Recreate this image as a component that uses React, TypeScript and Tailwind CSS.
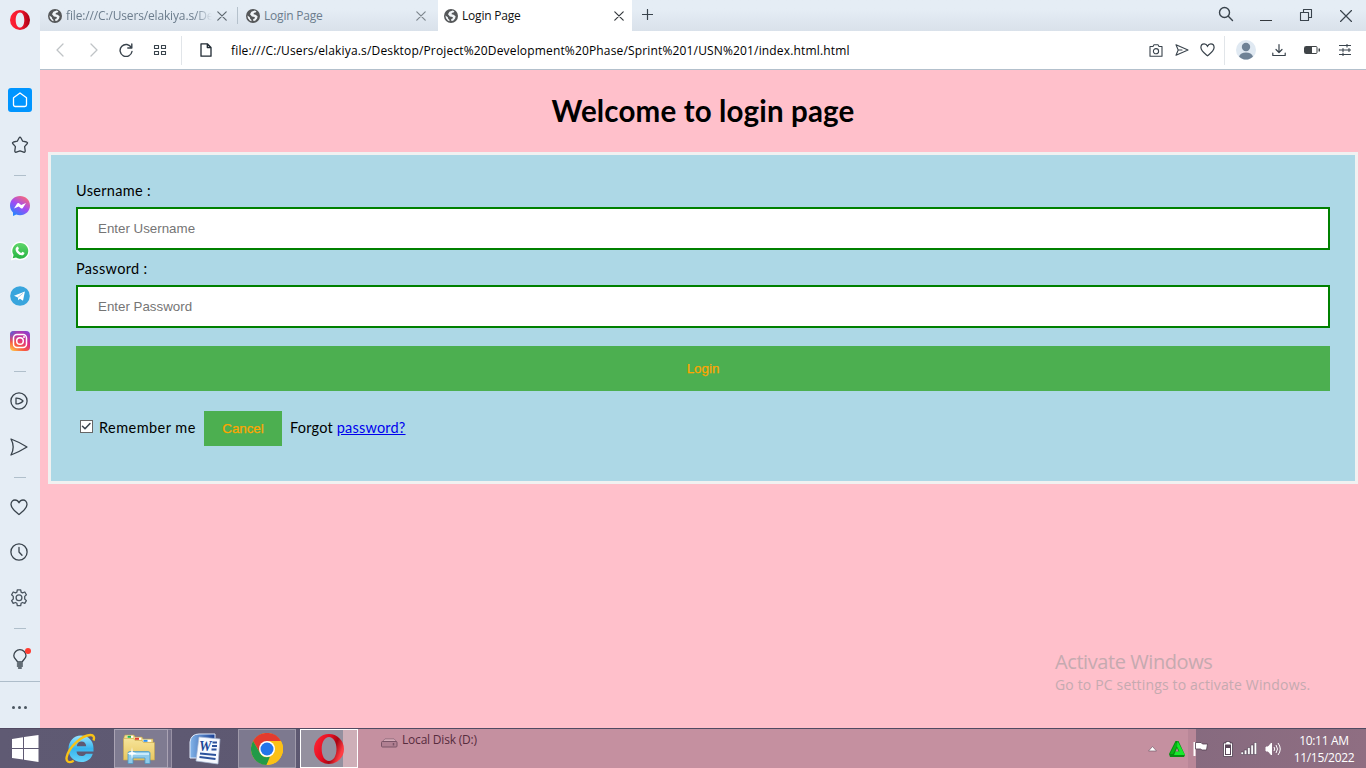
import React from "react";

const ui = "font-['Open_Sans','Noto_Sans',sans-serif]";
const page = "font-[Lato,'Open_Sans',sans-serif]";

type IconProps = { className?: string };

function Stroke({ w, h, d, className = "text-[#39434c]", sw = 1.3 }: { w: number; h: number; d: string; className?: string; sw?: number }) {
  return (
    <svg width={w} height={h} viewBox={`0 0 ${w} ${h}`} fill="none" stroke="currentColor" strokeWidth={sw} strokeLinejoin="round" strokeLinecap="round" className={`shrink-0 ${className}`}>
      <path d={d} />
    </svg>
  );
}

function Cell({ className, children }: { className: string; children?: React.ReactNode }) {
  return <div className={`flex shrink-0 items-center justify-center ${className}`}>{children}</div>;
}

function Globe() {
  return (
    <svg width="14" height="14" viewBox="0 0 14 14" className="shrink-0">
      <circle cx="7" cy="7" r="7" fill="#555759" />
      <path d="M8.600 1.600 5.400 2.800 4 5.300l1.900 2.200 2.800.5.2 1.200-1.800 1 .3 1.900 1.800-.4 1.900-2.200.5-2.300-2-1.500-2-.4.2-1.300 2.200-.7.3-1Z" fill="#f1f4f7" />
      <path d="m1.400 6.400 2.400 1.800.4 1.500 1.300 1.400-.1 1.100-1.600-.8-1.800-2.200Z" fill="#f1f4f7" />
    </svg>
  );
}

function Close({ className }: IconProps) {
  return <Stroke w={10} h={10} d="M.8.8l8.400 8.400M9.200.8.8 9.200" sw={1.2} className={className} />;
}

function OperaLogo() {
  return (
    <svg width="20" height="20" viewBox="0 0 20 20">
      <defs>
        <linearGradient id="ol" x1="0" x2="1"><stop offset="0" stopColor="#ff2135" /><stop offset=".55" stopColor="#f0162c" /><stop offset="1" stopColor="#a70014" /></linearGradient>
      </defs>
      <path fillRule="evenodd" fill="url(#ol)" d="M10 0a10 10 0 1 0 0 20 10 10 0 0 0 0-20Zm0 2.400c2.600 0 4.300 3.200 4.300 7.600s-1.700 7.600-4.300 7.600S5.700 14.400 5.700 10 7.400 2.400 10 2.400Z" />
    </svg>
  );
}

const heart = "M9 15.500C6.500 13.500 1 9.800 1 5.500 1 2.900 2.900 1 5 1c1.900 0 3.200 1.100 4 2.800C9.800 2.100 11.100 1 13 1c2.100 0 4 1.900 4 4.500 0 4.300-5.500 8-8 10Z";

function Messenger() {
  return (
    <svg width="20" height="20" viewBox="0 0 20 20">
      <defs><linearGradient id="ms" x1=".2" y1="1" x2=".8" y2="0"><stop offset="0" stopColor="#1a8cff" /><stop offset=".5" stopColor="#a04bf5" /><stop offset="1" stopColor="#ff6b70" /></linearGradient></defs>
      <path fill="url(#ms)" d="M10 0C4.400 0 0 4.100 0 9.500c0 2.900 1.200 5.300 3 7V20l3.200-1.400c1.100.4 2.500.6 3.800.6 5.600 0 10-4.200 10-9.700S15.600 0 10 0Z" />
      <path fill="#fff" d="M4 12.500 7.100 7.600c.4-.7 1.200-.8 1.900-.4l2.200 1.700L16 6.900l-3.200 5c-.4.700-1.200.8-1.900.3L8.700 10.500Z" />
    </svg>
  );
}

function WhatsApp() {
  return (
    <svg width="20" height="20" viewBox="0 0 20 20">
      <defs><linearGradient id="wa" x1="0" y1="0" x2="0" y2="1"><stop offset="0" stopColor="#5fd66b" /><stop offset="1" stopColor="#28b442" /></linearGradient></defs>
      <path fill="#fff" d="M10.300.5a9.300 9.300 0 0 0-8 14L.8 19.500l5-1.300A9.400 9.400 0 1 0 10.300.5Z" />
      <path fill="url(#wa)" d="M10.300 2a7.900 7.900 0 0 0-6.700 12.100l-.9 3.200 3.300-.8A7.900 7.900 0 1 0 10.300 2Z" />
      <path fill="#fff" d="M7.200 5.700c.5-.2.900 0 1 .4l.7 1.700-.9 1.200c.8 1.500 1.900 2.400 3.300 3l1-1.200 2.100 1c.2 1.700-1.300 2.700-2.800 2.500-3.100-.4-5.800-3.300-6-5.900 0-1.200.7-2.300 1.600-2.700Z" />
    </svg>
  );
}

function Telegram() {
  return (
    <svg width="20" height="20" viewBox="0 0 20 20">
      <circle cx="10" cy="10" r="9.800" fill="#38a5dd" />
      <path fill="#fff" d="m4 9.700 10.900-4.300-1.900 9.400-3.100-2-1.600 1.500-.4-2.800Z" />
      <path stroke="#a8cfe7" d="m7.900 11.500 5-4.200" />
    </svg>
  );
}

function Instagram() {
  return (
    <svg width="20" height="20" viewBox="0 0 20 20">
      <defs>
        <linearGradient id="ig" x1=".1" y1="1" x2=".8" y2="0"><stop offset="0" stopColor="#ffc84b" /><stop offset=".3" stopColor="#f95b3f" /><stop offset=".62" stopColor="#dc2e85" /><stop offset="1" stopColor="#8b41d0" /></linearGradient>
        <radialGradient id="ih" cx=".05" cy=".05" r=".55"><stop offset="0" stopColor="#5465d7" /><stop offset="1" stopColor="#a044bf" stopOpacity="0" /></radialGradient>
      </defs>
      <rect width="20" height="20" rx="4" fill="url(#ig)" /><rect width="20" height="20" rx="4" fill="url(#ih)" />
      <g stroke="#fff" strokeWidth="1.500" fill="none"><rect x="3.500" y="3.500" width="13" height="13" rx="3.500" /><circle cx="10" cy="10" r="3.300" /></g><circle cx="14" cy="6" r="1" fill="#fff" />
    </svg>
  );
}

function Gear() {
  return (
    <svg width="18" height="18" viewBox="0 0 18 18" fill="none" stroke="#4a5560" strokeWidth="1.300" strokeLinejoin="round">
      <path d="M7.300.8h3.400l.4 2.300 1.400.8 2.300-.9 1.600 2.800-1.700 1.600v2.600l1.700 1.600-1.600 2.800-2.300-.9-1.400.8-.4 2.300H7.300l-.4-2.300-1.400-.8-2.300.9-1.600-2.800L3.300 10V7.400L1.600 5.800 3.200 3l2.300.9 1.400-.8Z" /><circle cx="9" cy="8.700" r="2.900" />
    </svg>
  );
}

function Divider({ h }: { h: string }) {
  return <Cell className={`w-10 ${h}`}><div className="h-px w-3 bg-[#b0bfcb]" /></Cell>;
}

function Sidebar() {
  return (
    <aside className="flex w-10 shrink-0 flex-col bg-[#e5edf5]">
      <Cell className="h-10"><OperaLogo /></Cell>
      <Cell className="mt-[38px] h-11"><div className="flex size-6 items-center justify-center rounded-[3px] bg-[#0095ff]"><Stroke w={16} h={16} d="M1.500 5.800 8 1l6.500 4.800v7c0 1.100-.7 1.700-1.700 1.700H3.200c-1 0-1.700-.6-1.700-1.700Z" className="text-white" /></div></Cell>
      <Cell className="h-[46px]"><Stroke w={18} h={18} d="M8 2q1-1.500 2 0l1.700 3.200 3.800.8q1.700.5.6 1.800l-2.500 2.800.6 4.200q.1 1.900-1.500 1.300L9 14.800l-3.700 1.300q-1.600.6-1.500-1.300l.6-4.200-2.500-2.800Q.8 6.500 2.500 6l3.800-.8Z" /></Cell>
      <Divider h="h-[15px]" />
      <Cell className="h-[46px]"><Messenger /></Cell>
      <Cell className="h-11"><WhatsApp /></Cell>
      <Cell className="h-[46px]"><Telegram /></Cell>
      <Cell className="h-11"><Instagram /></Cell>
      <Divider h="h-4" />
      <Cell className="h-[45px] pb-px pr-0.5"><Stroke w={18} h={18} d="M9 .9a8.100 8.100 0 1 0 0 16.200A8.100 8.100 0 0 0 9 .9ZM6 6.200v5.600c1.500.6 5.600-.9 7-2.800-1.400-1.900-5.500-3.400-7-2.800Z" /></Cell>
      <Cell className="h-[46px] pr-0.5"><Stroke w={18} h={18} d="M1 1c5.500 2 11 4.900 16 8-5 3.100-10.500 6-16 8 3-5.500 3-10.500 0-16Z" /></Cell>
      <Divider h="h-[15px]" />
      <Cell className="h-[45px] pr-0.5"><Stroke w={18} h={17} d={heart} /></Cell>
      <Cell className="h-[45px] pb-px pr-0.5"><Stroke w={18} h={18} d="M9 .9a8.100 8.100 0 1 0 0 16.200A8.100 8.100 0 0 0 9 .9ZM9 4.500V9l3 3.300" /></Cell>
      <Cell className="h-[45px] pr-0.5"><Gear /></Cell>
      <Divider h="h-[17px]" />
      <Cell className="h-11">
        <div className="relative flex">
          <Stroke w={14} h={20} d="M4.400 13C4.200 10.800.8 9.800.8 6.800a6.100 6.100 0 0 1 12.200 0c0 3-3.400 4-3.600 6.200ZM4.400 15h5M4.400 17h5M5.500 19h2.800" />
          <span className="absolute -right-[4px] -top-[1px] size-1.5 rounded-full bg-[#ff3b30]" />
        </div>
      </Cell>
      <div className="h-px bg-[#aebdca]" />
      <Cell className="h-[46px] gap-[3px] pt-[5px] pr-px"><i className="size-[3px] rounded-full bg-[#4a5560]" /><i className="size-[3px] rounded-full bg-[#4a5560]" /><i className="size-[3px] rounded-full bg-[#4a5560]" /></Cell>
    </aside>
  );
}

function TabBar() {
  return (
    <div className={`flex h-[31px] bg-linear-to-b from-[#e5edf5] from-30% to-[#d9e1ea] text-[12px] leading-[31px] text-[#6c7d8d] ${ui}`}>
      <div className="flex w-[197px] items-center pl-2"><Globe /><span className="ml-1 w-[146px] whitespace-nowrap tracking-[-0.15px] [mask-image:linear-gradient(to_right,#000_88%,transparent)]">file:///C:/Users/elakiya.s/De</span><Close className="ml-[5px] text-[#5e6870]" /></div>
      <div className="mt-[7px] h-[17px] w-px bg-[#b5c1cc]" />
      <div className="flex w-[200px] items-center pl-2"><Globe /><span className="ml-1 w-[152px] tracking-[-0.2px]">Login Page</span><Close className="text-[#7d868d]" /></div>
      <div className="flex w-[194px] items-center bg-white pl-1.5 text-[#111]"><Globe /><span className="ml-1 w-[152px] tracking-[-0.2px]">Login Page</span><Close className="text-[#34393d]" /></div>
      <Cell className="w-[31px] pb-0.5"><Stroke w={11} h={11} d="M5.500.500v10M.500 5.500h10" sw={1.2} /></Cell>
      <div className="flex-1" />
      <Cell className="w-10 pb-[3px]"><Stroke w={16} h={16} d="M6.500 1.500a5 5 0 1 0 0 10 5 5 0 0 0 0-10ZM10.300 10.300l4.200 4.200" sw={1.4} /></Cell>
      <Cell className="w-10 pt-[9px]"><div className="h-px w-3 bg-[#34393d]" /></Cell>
      <Cell className="w-10 pb-px"><Stroke w={14} h={14} d="M1.500 4.500h8v8h-8ZM4.500 4.500v-3h8v8h-3" sw={1.1} /></Cell>
      <Cell className="w-10"><Stroke w={12} h={12} d="M.5.5l11 11M11.500.5l-11 11" sw={1.2} /></Cell>
    </div>
  );
}

function AddressBar() {
  return (
    <div className={`flex h-[39px] items-center border-b border-[#b3c0cc] bg-white ${ui}`}>
      <Cell className="w-10"><Stroke w={8} h={14} d="M7 1 1 7l6 6" className="text-[#bfc3c6]" /></Cell>
      <Cell className="w-7"><Stroke w={8} h={14} d="m1 1 6 6-6 6" className="text-[#bfc3c6]" /></Cell>
      <Cell className="w-[37px] pr-px"><Stroke w={14} h={14} d="M12.400 4.700A6 6 0 1 0 13 8.500M12.800 1v4H8.800" sw={1.4} /></Cell>
      <Cell className="w-[30px] pr-px"><Stroke w={14} h={12} d="M1.500 1.500h4v3h-4ZM8.500 1.500h4v3h-4ZM1.500 7.500h4v3h-4ZM8.500 7.500h4v3h-4Z" sw={1.1} /></Cell>
      <div className="ml-[6px] h-[29px] w-px bg-[#e1e5e9]" />
      <Cell className="ml-[18px] w-3"><Stroke w={12} h={14} d="M1 .800h6.300L11 4.500v8.700H1ZM7.300.800v3.700H11" sw={1.3} className="text-[#202a33]" /></Cell>
      <span className="ml-[19px] flex-1 whitespace-nowrap pt-0.5 text-[12px] tracking-[0.158px] text-black">file:///C:/Users/elakiya.s/Desktop/Project%20Development%20Phase/Sprint%201/USN%201/index.html.html</span>
      <Cell className="w-[27px]"><Stroke w={14} h={13} d="M1 2.500h3l1-1.700h4l1 1.700h3v9.700H1ZM7 4.600a2.600 2.600 0 1 0 0 5.200 2.600 2.600 0 0 0 0-5.200Z" sw={1.1} /></Cell>
      <Cell className="w-[26px]"><Stroke w={14} h={12} d="M1 .700 13 6 1 11.300 3.200 6ZM3.200 6H7" sw={1.1} /></Cell>
      <Cell className="w-[25px]"><svg width="15" height="14" viewBox="0 0 18 17" fill="none" stroke="#39434c" strokeWidth="1.500"><path d={heart} /></svg></Cell>
      <div className="ml-[4px] h-[29px] w-px bg-[#e1e5e9]" />
      <Cell className="ml-[11px] w-5">
        <svg width="20" height="20" viewBox="0 0 20 20"><circle cx="10" cy="10" r="10" fill="#e0e9f2" /><circle cx="10" cy="7" r="4.200" fill="#6f8296" /><path fill="#6f8296" d="M3 16.500c1-3 3.500-4.100 7-4.100s6 1.100 7 4.100c-3.500 4.100-10.500 4.100-14 0Z" /></svg>
      </Cell>
      <Cell className="ml-[13px] w-[20px]"><Stroke w={14} h={14} d="M7 1.500v7.800M4 6.500l3 3 3-3M.8 10v2.500h12.400V10" sw={1.2} /></Cell>
      <Cell className="ml-[15px] w-4"><svg width="16" height="8" viewBox="0 0 16 8" className="text-[#3f4447]"><rect x=".5" y=".5" width="12.500" height="7" rx="1" fill="none" stroke="currentColor" /><path fill="currentColor" d="M1 1h7v6H1ZM14.500 2.500H16v3h-1.500Z" /></svg></Cell>
      <Cell className="ml-[19px] mr-[15px] w-3"><Stroke w={12} h={12} d="M0 1.500h12M0 6h12M0 10.500h12M8 0v3M4 4.500v3M10 4.500v3M4 9v3" sw={1.1} /></Cell>
    </div>
  );
}

function Field({ label, placeholder, type }: { label: string; placeholder: string; type: string }) {
  return (
    <label className="block">
      <span className="block h-[35px] pt-px text-[14.5px] leading-[35px] tracking-[0.33px]">{label}</span>
      <input type={type} placeholder={placeholder} className="block h-[43px] w-full border-2 border-[#008000] bg-white px-5 font-['Liberation_Sans',sans-serif] text-[13.333px] placeholder:text-[#757575] outline-none" />
    </label>
  );
}

function LoginPage() {
  return (
    <main className={`relative flex-1 bg-[#ffc0cb] px-2 text-black ${page}`}>
      <h1 className="h-[82px] text-center text-[29.500px] leading-[82px] font-bold tracking-[0.15px]">Welcome to login page</h1>
      <form className="h-[332px] border-[3px] border-[#f1f1f1] bg-[#add8e6] px-[25px] pt-[17px]">
        <Field label="Username :" placeholder="Enter Username" type="text" />
        <Field label="Password :" placeholder="Enter Password" type="password" />
        <button type="button" className="mt-[18px] block h-[45px] w-full bg-[#4caf50] font-['Liberation_Sans',sans-serif] text-[13.333px] text-[#ffa500] [-webkit-text-stroke:0.25px_#ffa500]">Login</button>
        <div className="mt-5 flex h-[35px] items-center whitespace-nowrap text-[14.500px]">
          <span className="mb-1 ml-1 flex size-[13px] items-center justify-center border border-[#666] bg-white"><Stroke w={11} h={9} d="m1.500 4.200 2.500 2.600L9 1.500" sw={1.5} /></span>
          <span className="ml-[6px] w-[105px] pb-px tracking-[0.45px]">Remember me</span>
          <button type="button" className="h-[35px] w-[78px] bg-[#4caf50] font-['Liberation_Sans',sans-serif] text-[13.333px] text-[#ffa500] [-webkit-text-stroke:0.25px_#ffa500]">Cancel</button>
          <span className="ml-[8px] pb-px tracking-[0.2px]">Forgot <a className="text-[#0000ee] underline">password?</a></span>
        </div>
      </form>
      <div className={`absolute left-[1015px] top-[580px] whitespace-nowrap text-[#c5aab0] ${ui}`}>
        <div className="-mt-px mb-px text-[20px] leading-[25px] tracking-[-0.42px]">Activate Windows</div>
        <div className="text-[14px] leading-5 tracking-[0.16px]">Go to PC settings to activate Windows.</div>
      </div>
    </main>
  );
}

function IE() {
  return (
    <svg width="32" height="32" viewBox="0 0 32 32">
      <defs><linearGradient id="ie" x1="0" y1="0" x2="0" y2="1"><stop offset="0" stopColor="#9ae5ff" /><stop offset=".5" stopColor="#36b4ee" /><stop offset="1" stopColor="#65d3fb" /></linearGradient></defs>
      <path fillRule="evenodd" fill="url(#ie)" d="M17 2.500c7.500 0 12.500 5.500 12.500 12.500v3.500h-17c.3 3 2.200 4.500 5 4.500 2.200 0 3.500-.8 4.300-2.300h7c-1.500 5.200-5.700 8.300-11.500 8.300C9.700 29 4.500 23.500 4.500 16S9.500 2.500 17 2.500Zm-4.200 10.700h9.400c-.2-3-1.900-4.700-4.700-4.700s-4.400 1.700-4.700 4.700Z" />
      <path fill="none" stroke="#f9c216" strokeWidth="2.400" d="M29.500 7.500c1.200-3.200.2-5.500-3-5.500C18.500 2 5 13.500 2.700 24c-1 5 2.300 6.500 7 3.700" />
    </svg>
  );
}

function Explorer() {
  return (
    <svg width="34" height="32" viewBox="0 0 34 32">
      <defs><linearGradient id="ex" x1="0" y1="0" x2="0" y2="1"><stop offset="0" stopColor="#f6e49a" /><stop offset="1" stopColor="#e9c75f" /></linearGradient></defs>
      <path fill="#f3dc8b" stroke="#b99d4d" strokeWidth=".6" d="M2 4l1-2h9l1 2h7l1 2h10v7H2Z" />
      <path fill="#fff" d="M5 2.800h6v2H5Zm8 2h6v2h-6Zm8 2h8v2h-8Z" />
      <path fill="url(#ex)" stroke="#c9a84c" strokeWidth=".6" d="M1.500 5.500h10l1.500 2h7l1.500 2H32.500V27h-31Z" />
      <path fill="#21b14b" d="M5.500 2.800h3.500v2H5.500Z" /><path fill="#e14030" d="M13 4.800h4v2h-4Z" /><path fill="#2c8eea" d="M21.500 6.800h4v2h-4Z" />
      <path fill="#8fcbea" stroke="#4d9bc4" strokeWidth=".8" d="M6 20q0-1.500 2-1.500h18q2 0 2 1.500v10.500h-5V25H11v5.500H6Z" /><path d="M7 20h20v2H7Z" fill="#c9eafa" />
      <path fill="#fff" opacity=".95" d="m10 14 .8 5 4 1.500-4 1-.8 5-.8-5-4-1 4-1.500Z" />
    </svg>
  );
}

function Word() {
  return (
    <svg width="32" height="32" viewBox="0 0 32 32">
      <defs><linearGradient id="wd" x1="0" x2="1"><stop offset="0" stopColor="#83b5ea" /><stop offset="1" stopColor="#1a3f93" /></linearGradient></defs>
      <path fill="url(#wd)" stroke="#e0eafb" strokeWidth="1" d="M1 9q1-8 9-8h16v24H1Z" />
      <path fill="#f6f9ff" stroke="#a7b7d2" strokeWidth=".7" d="m10 4 21 2-2 25L7 28Z" />
      <path stroke="#2b529c" strokeWidth="1.800" fill="none" d="M23.500 9.500H28M23 13h5M22.500 16.500h5M11 20.500l16 1.500M10.500 24l16 2" />
      <text x="10" y="17.500" fontSize="14" fontWeight="bold" fontStyle="italic" fontFamily="Liberation Serif" fill="#1d4696">W</text>
    </svg>
  );
}

function Chrome() {
  return (
    <svg width="32" height="32" viewBox="0 0 32 32">
      <circle cx="16" cy="16" r="16" fill="#fbc116" />
      <path fill="#e33b2e" d="M2.100 8a16 16 0 0 1 27.800 0H16L9 20Z" /><path fill="#229a48" d="M2.100 8 9 20c2 4 6 5 10 3.500L15.500 32A16 16 0 0 1 2.100 8Z" /><path fill="#fbc116" d="M16 8h13.900A16 16 0 0 1 15.500 32L23 20Z" />
      <circle cx="16" cy="16" r="8" fill="#fff" /><circle cx="16" cy="16" r="6.500" fill="#2375ea" />
    </svg>
  );
}

function OperaBig() {
  return (
    <svg width="30" height="30" viewBox="0 0 30 30">
      <defs><linearGradient id="ob" x1="0" x2="1" y1="0" y2=".4"><stop offset="0" stopColor="#ff2936" /><stop offset=".5" stopColor="#e50d21" /><stop offset=".75" stopColor="#a90412" /><stop offset="1" stopColor="#ff3d43" /></linearGradient></defs>
      <path fillRule="evenodd" fill="url(#ob)" d="M15 0a15 15 0 1 0 0 30 15 15 0 0 0 0-30Zm0 3c4.300 0 7.500 5 7.500 12S19.300 27 15 27 7.700 22 7.700 15 10.700 3 15 3Z" />
    </svg>
  );
}

function Taskbar() {
  return (
    <footer className={`flex h-10 items-center border-t border-[#514a62] bg-linear-to-r from-[#5f5a73] from-0% via-[#5d5871] via-25% to-[#8f6e82] ${ui}`}>
      <Cell className="w-[50px]"><svg width="27" height="27" viewBox="0 0 27 27" fill="#fff"><path d="M0 4 11 2.300V13H0ZM12 2.100 26.500 0v13H12ZM0 14h11v10.500L0 23ZM12 14h14.500v13L12 24.700Z" /></svg></Cell>
      <Cell className="w-[64px] pr-1"><IE /></Cell>
      <Cell className="h-[39px] w-[54px] border border-[#aaa3b4] bg-[#7f7b91] pr-1"><Explorer /></Cell>
      <div className="h-[39px] w-1 border border-l-0 border-[#9992a5] bg-[#77728a]" />
      <Cell className="w-[66px]"><Word /></Cell>
      <Cell className="h-[39px] w-[58px] border border-[#9f9aaa] bg-[#7d798f]"><Chrome /></Cell>
      <Cell className="ml-1 h-[39px] w-[58px] border border-white bg-[linear-gradient(to_right,#94909f_42px,#ceafb8_42px)]"><OperaBig /></Cell>
      <div className="flex h-[39px] w-[838px] shrink-0 items-start bg-[linear-gradient(to_right,#c590a0_830px,#b98798_830px)]">
        <svg width="17" height="10" viewBox="0 0 17 10" className="ml-[23px] mt-[9px]" fill="#b18092" stroke="#7a5467"><path fill="#d3a9b6" stroke="#9c7384" d="M1 4 4 .8h9L16 4Z" /><rect x=".5" y="3.500" width="15.500" height="5.500" rx="1" /><path d="M12.500 5v2.500" strokeWidth="1.500" /></svg>
        <span className="ml-[4px] mt-[2px] text-[12px] leading-[18px] tracking-[-0.200px] text-[#572c3e]">Local Disk (D:)</span>
      </div>
      <div className="relative -ml-[50px] flex items-center">
        <Cell className="w-3"><svg width="9" height="6" viewBox="0 0 9 6"><path d="M4.500.5 8.500 5h-8Z" fill="#fff" stroke="#775c6b" strokeWidth=".7" /></svg></Cell>
        <Cell className="ml-[11px] w-4"><svg width="16" height="16" viewBox="0 0 16 16"><path fill="#068c12" d="M6.500 0h3L16 14l-1 2H1l-1-3Z" /><path fill="#17e92c" d="M8.500 0 16 14H5l1.500-3.500h4L7.800 5Z" /><path fill="#08b817" d="M7 1 8.500 4 4 13 1 13Z" /><path fill="#b98798" d="m8 7 1.600 3.500H6.500Z" /></svg></Cell>
        <Cell className="ml-[7px] w-[18px]"><svg width="18" height="16" viewBox="0 0 18 16"><path d="M2.500 1v14" stroke="#fff" strokeWidth="2" /><path fill="#fff" stroke="#513e4f" strokeWidth=".8" d="M3.500 1.500h5.500l1.500 1.500h5l-1 6H10L8.500 8h-5Z" /></svg></Cell>
        <Cell className="ml-[12px] w-3"><svg width="10" height="16" viewBox="0 0 10 16"><path fill="#fff" stroke="#3f3042" strokeWidth=".7" d="M3 .5h4V2h2.500v13.500h-9V2H3Z" /><path fill="#5a4759" d="M2 3.500h6v10.500H2Z" /><path fill="#fff" d="M3 7h4v6H3Z" /></svg></Cell>
        <Cell className="ml-[7px] w-4"><svg width="16" height="13" viewBox="0 0 16 13" fill="#fff" stroke="#3f3042" strokeWidth=".5"><path d="M0 10h2.500v2.500H0ZM3.300 8h2.500v4.500H3.300ZM6.600 5.500h2.500v7H6.600ZM9.900 3h2.500v9.500H9.900ZM13.200.5h2.500v12h-2.500Z" /></svg></Cell>
        <Cell className="ml-[8px] w-4"><svg width="16" height="14" viewBox="0 0 16 14" fill="none" stroke="#fff"><path fill="#fff" d="M1 5h2l3.500-4v12L3 9H1Z" /><path d="M9 5q1.500 2 0 4M11 3q3 4 0 8M13 1q4.500 6 0 12" /></svg></Cell>
        <div className="ml-[10px] w-[66px] whitespace-nowrap text-center text-[12px] leading-[17px] tracking-[-0.300px] text-white"><div>10:11 AM</div><div>11/15/2022</div></div>
      </div>
    </footer>
  );
}

export default function App() {
  return (
    <div className="flex h-[768px] w-[1366px] flex-col overflow-hidden">
      <div className="flex h-[728px]">
        <Sidebar />
        <div className="flex min-w-0 flex-1 flex-col"><TabBar /><AddressBar /><LoginPage /></div>
      </div>
      <Taskbar />
    </div>
  );
}
